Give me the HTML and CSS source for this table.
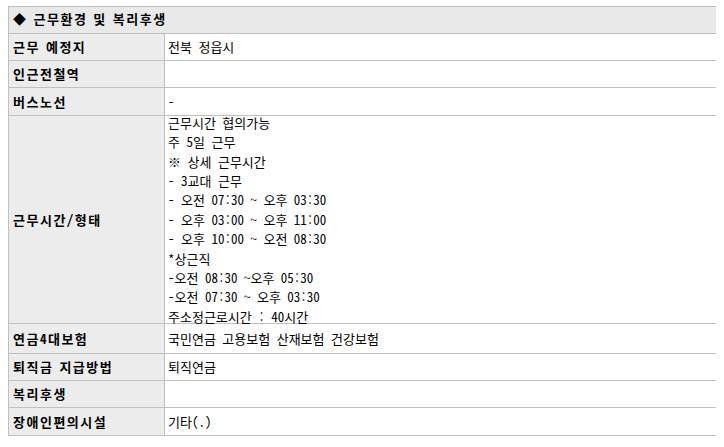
FILE: index.html
```html
<!DOCTYPE html>
<html lang="ko">
<head>
<meta charset="utf-8">
<title>근무환경 및 복리후생</title>
<link rel="stylesheet" href="styles.css">
</head>
<body>
<div class="info-table">
  <div class="cell head">◆ 근무환경 및 복리후생</div>

  <div class="cell label">근무 예정지</div>
  <div class="cell value">전북 정읍시</div>

  <div class="cell label">인근전철역</div>
  <div class="cell value"></div>

  <div class="cell label">버스노선</div>
  <div class="cell value">-</div>

  <div class="cell label">근무시간/형태</div>
  <div class="cell value multi">
    <div>근무시간 협의가능</div>
    <div>주 5일 근무</div>
    <div>※ 상세 근무시간</div>
    <div>- 3교대 근무</div>
    <div>- 오전 07:30 ~ 오후 03:30</div>
    <div>- 오후 03:00 ~ 오후 11:00</div>
    <div>- 오후 10:00 ~ 오전 08:30</div>
    <div>*상근직</div>
    <div>-오전 08:30 ~오후 05:30</div>
    <div>-오전 07:30 ~ 오후 03:30</div>
    <div>주소정근로시간 : 40시간</div>
  </div>

  <div class="cell label">연금4대보험</div>
  <div class="cell value">국민연금 고용보험 산재보험 건강보험</div>

  <div class="cell label">퇴직금 지급방법</div>
  <div class="cell value">퇴직연금</div>

  <div class="cell label">복리후생</div>
  <div class="cell value"></div>

  <div class="cell label">장애인편의시설</div>
  <div class="cell value">기타(.)</div>
</div>
</body>
</html>
```
FILE: styles.css
```css
html, body {
  background: #ffffff;
}
body {
  margin: 6px 8px;
  font-family: "Noto Sans Mono CJK KR", "Noto Sans CJK KR", monospace;
  font-size: 13px;
  color: #000;
}
.info-table {
  width: 709px;
  box-sizing: border-box;
  display: grid;
  grid-template-columns: 156px 552px;
  grid-template-rows: 27px 27px 27px 28px 208px 30px 27px 27px 28px;
  border-top: 1px solid #c0c0c0;
  border-left: 1px solid #c0c0c0;
}
.cell {
  box-sizing: border-box;
  border-right: 1px solid #c0c0c0;
  border-bottom: 1px solid #c0c0c0;
  display: flex;
  flex-direction: column;
  justify-content: center;
  line-height: 19.4px;
  min-width: 0;
  white-space: nowrap;
}
.head {
  grid-column: 1 / 3;
  background: #e9e9e9;
  font-weight: bold;
  letter-spacing: 1.5px;
  word-spacing: -2px;
  padding: 0 0 2px 4px;
}
.label {
  background: #ececec;
  font-weight: bold;
  letter-spacing: 1.5px;
  word-spacing: -2px;
  padding-left: 4px;
}
.value {
  background: #fff;
  padding-left: 3px;
}
.multi {
  overflow: visible;
}
```
